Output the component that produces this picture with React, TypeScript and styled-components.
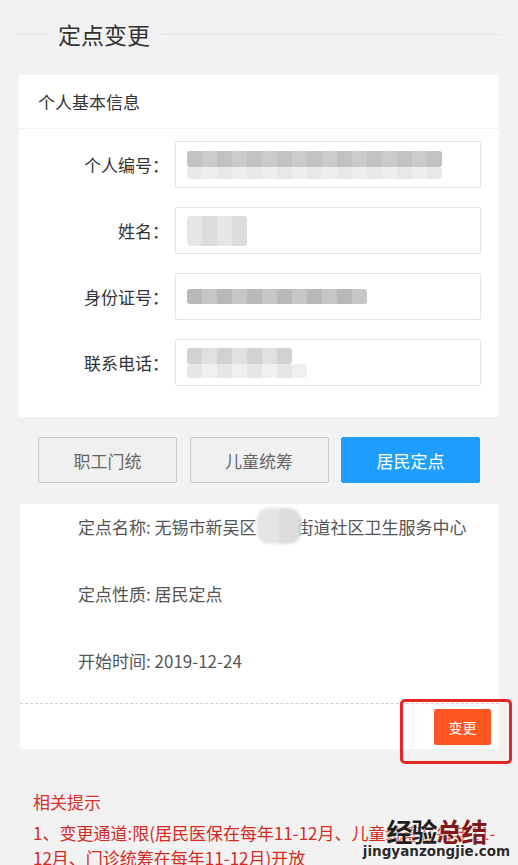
import React from "react";
import styled, { createGlobalStyle } from "styled-components";

const Global = createGlobalStyle`
  html, body { margin: 0; padding: 0; overflow: hidden; background: #f2f2f2; }
  body { font-family: "Noto Sans CJK SC", "Noto Sans", sans-serif; color: #333; }
  * { box-sizing: border-box; }
`;

const Page = styled.div`
  position: relative;
  width: 518px;
  height: 865px;
  overflow: hidden;
  background: #f2f2f2;
`;

const TitleBar = styled.div`
  display: flex;
  align-items: center;
  padding: 22px 18px 0 15px;
`;

const Rule = styled.div<{ $w?: number }>`
  height: 1px;
  background: #e4e4e4;
  ${(p) => (p.$w ? `width: ${p.$w}px;` : "flex: 1;")}
`;

const Title = styled.h1`
  margin: 0;
  padding: 0 12px 0 10px;
  font-size: 23px;
  line-height: 24px;
  font-weight: 400;
  color: #333;
`;

const Card = styled.section<{ $ml: number; $w: number; $mt: number }>`
  position: relative;
  margin: ${(p) => p.$mt}px 0 0 ${(p) => p.$ml}px;
  width: ${(p) => p.$w}px;
  background: #fff;
  border-radius: 2px;
`;

const CardHeader = styled.div`
  height: 54px;
  display: flex;
  align-items: center;
  padding: 0 19px;
  border-bottom: 1px solid #f0f0f0;
  font-size: 17px;
  color: #333;
`;

const Form = styled.div`
  display: flex;
  flex-direction: column;
  gap: 19px;
  padding: 12px 18px 31px 0;
`;

const Row = styled.div`
  display: grid;
  grid-template-columns: 150px 306px;
  column-gap: 6px;
  align-items: center;
`;

const Label = styled.label`
  text-align: right;
  font-size: 17px;
  line-height: 24px;
  color: #333;
`;

const InputBox = styled.div`
  height: 47px;
  border: 1px solid #e6e6e6;
  border-radius: 2px;
  background: #fff;
  display: flex;
  align-items: center;
  padding-left: 11px;
`;

const Mosaic = styled.div<{ $w: number; $h: number; $dark: string; $light: string }>`
  width: ${(p) => p.$w}px;
  height: ${(p) => p.$h}px;
  border-radius: 3px;
  background: repeating-linear-gradient(
    90deg,
    ${(p) => p.$dark} 0px,
    ${(p) => p.$dark} 15px,
    ${(p) => p.$light} 15px,
    ${(p) => p.$light} 30px
  );
  filter: blur(0.6px);
`;

const MosaicSplit = styled.div<{ $w: number }>`
  width: ${(p) => p.$w}px;
  display: flex;
  flex-direction: column;
`;

const Tabs = styled.div`
  display: grid;
  grid-template-columns: repeat(3, 139px);
  column-gap: 12.5px;
  margin: 20px 0 0 38px;
`;

const TabButton = styled.button<{ $active?: boolean }>`
  height: 46px;
  border-radius: 2px;
  font-family: inherit;
  font-size: 17px;
  cursor: pointer;
  border: 1px solid ${(p) => (p.$active ? "#1e9fff" : "#c9c9c9")};
  background: ${(p) => (p.$active ? "#1e9fff" : "#f0f0f0")};
  color: ${(p) => (p.$active ? "#fff" : "#666")};
`;

const InfoList = styled.div`
  display: flex;
  flex-direction: column;
  gap: 23px;
  padding-left: 58px;
`;

const InfoRow = styled.div`
  height: 44px;
  display: flex;
  align-items: center;
  font-size: 17px;
  color: #555;
  white-space: nowrap;
`;

const Blur = styled.span`
  display: inline-block;
  width: 44px;
  height: 36px;
  margin: 0 -4px 0 0;
  border-radius: 12px;
  background: linear-gradient(90deg, #e4e4e4 0 50%, #dcdcdc 50% 100%);
  filter: blur(1.5px);
`;

const Footer = styled.div`
  margin-top: 21px;
  border-top: 1px dashed #d0d0d0;
  height: 46px;
  display: flex;
  align-items: center;
  justify-content: flex-end;
  padding-right: 8px;
`;

const ChangeButton = styled.button`
  width: 57px;
  height: 36px;
  border: none;
  border-radius: 2px;
  background: #ff5722;
  color: #fff;
  font-family: inherit;
  font-size: 14px;
  cursor: pointer;
`;

const Highlight = styled.div`
  position: absolute;
  left: 380px;
  top: 195px;
  width: 112px;
  height: 65px;
  border: 3px solid #e52424;
  border-radius: 5px;
  pointer-events: none;
`;

const Tips = styled.div`
  margin: 40px 12px 0 33px;
  color: #d8312b;
`;

const TipsTitle = styled.div`
  font-size: 17px;
  line-height: 25px;
`;

const TipsText = styled.p`
  margin: 6px 0 0;
  font-size: 17px;
  line-height: 25px;
  color: #d42a24;
`;

const Watermark = styled.div`
  position: absolute;
  left: 368px;
  top: 816px;
  width: 137px;
  display: flex;
  flex-direction: column;
  align-items: center;
  pointer-events: none;
`;

const WmTitle = styled.div`
  font-size: 26px;
  line-height: 30px;
  font-weight: 700;
  letter-spacing: -1px;
  color: #1f1f1f;
  text-shadow: 0 0 2px #fff, 0 0 2px #fff;
`;

const WmRed = styled.span`
  color: #7e1a1a;
`;

const WmUrl = styled.div`
  margin-top: -3px;
  font-family: "DejaVu Sans", sans-serif;
  font-size: 13.5px;
  line-height: 16px;
  font-weight: 700;
  color: #2a2a2a;
  text-shadow: 0 0 2px #fff, 0 0 2px #fff, 0 0 1px #fff;
`;

export default function App() {
  return (
    <Page>
      <Global />
      <TitleBar>
        <Rule $w={33} />
        <Title>定点变更</Title>
        <Rule />
      </TitleBar>

      <Card $ml={19} $w={480} $mt={29}>
        <CardHeader>个人基本信息</CardHeader>
        <Form>
          <Row>
            <Label>个人编号：</Label>
            <InputBox>
              <MosaicSplit $w={255}>
                <Mosaic $w={255} $h={16} $dark="#c2c2c2" $light="#cbcbcb" />
                <Mosaic $w={255} $h={12} $dark="#e8e8e8" $light="#eeeeee" />
              </MosaicSplit>
            </InputBox>
          </Row>
          <Row>
            <Label>姓名：</Label>
            <InputBox>
              <Mosaic $w={60} $h={30} $dark="#e6e6e6" $light="#dcdcdc" />
            </InputBox>
          </Row>
          <Row>
            <Label>身份证号：</Label>
            <InputBox>
              <Mosaic $w={180} $h={15} $dark="#b8b8b8" $light="#c6c6c6" />
            </InputBox>
          </Row>
          <Row>
            <Label>联系电话：</Label>
            <InputBox>
              <MosaicSplit $w={120}>
                <Mosaic $w={105} $h={16} $dark="#d2d2d2" $light="#e0e0e0" />
                <Mosaic $w={120} $h={14} $dark="#e6e6e6" $light="#f0f0f0" />
              </MosaicSplit>
            </InputBox>
          </Row>
        </Form>
      </Card>

      <Tabs>
        <TabButton>职工门统</TabButton>
        <TabButton>儿童统筹</TabButton>
        <TabButton $active>居民定点</TabButton>
      </Tabs>

      <Card $ml={20} $w={479} $mt={21}>
        <InfoList>
          <InfoRow>
            定点名称: 无锡市新吴区<Blur />街道社区卫生服务中心
          </InfoRow>
          <InfoRow>定点性质: 居民定点</InfoRow>
          <InfoRow>开始时间: 2019-12-24</InfoRow>
        </InfoList>
        <Footer>
          <ChangeButton>变更</ChangeButton>
        </Footer>
        <Highlight />
      </Card>

      <Tips>
        <TipsTitle>相关提示</TipsTitle>
        <TipsText>
          1、变更通道:限(居民医保在每年11-12月、儿童统筹在每年11-12月、门诊统筹在每年11-12月)开放
        </TipsText>
      </Tips>

      <Watermark>
        <WmTitle>
          经验<WmRed>总结</WmRed>
        </WmTitle>
        <WmUrl>jingyanzongjie.com</WmUrl>
      </Watermark>
    </Page>
  );
}
